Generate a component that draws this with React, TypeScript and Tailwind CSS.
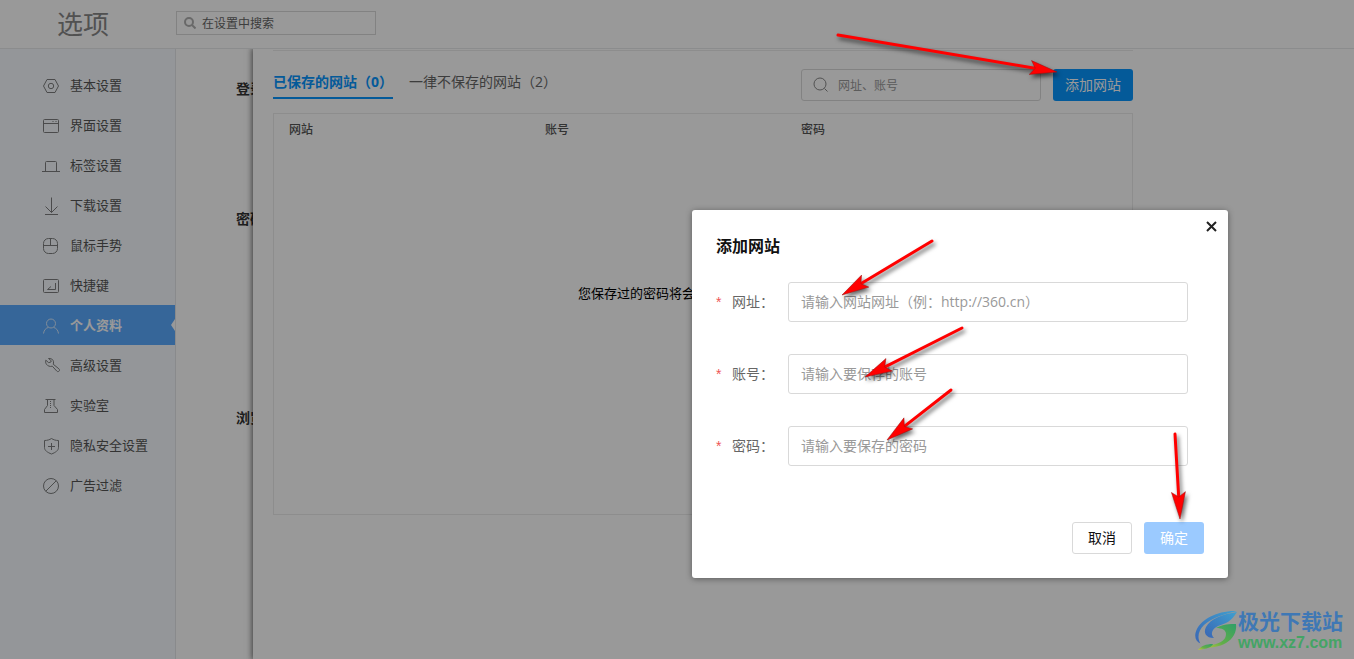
import React from 'react';

type IconProps = { children: React.ReactNode };

const Icon: React.FC<IconProps> = ({ children }) => (
  <svg className="size-[18px] shrink-0 opacity-75" viewBox="0 0 18 18" fill="none" stroke="currentColor" strokeWidth="1">
    {children}
  </svg>
);

const menus = [
  {
    text: '基本设置',
    icon: <><path d="M5 2.5h8l3.5 6.5-3.5 6.5H5L1.5 9z" strokeLinejoin="round" /><circle cx="9" cy="9" r="2.7" /></>,
  },
  {
    text: '界面设置',
    icon: <><rect x="1.500" y="2.500" width="15" height="13" rx="1" /><path d="M1.500 6.500h15M10.500 4.500h1M13.500 4.500h1" /></>,
  },
  {
    text: '标签设置',
    icon: <path d="M0 14.500h18M3.500 14.500v-9a1 1 0 0 1 1-1h9a1 1 0 0 1 1 1v9" />,
  },
  {
    text: '下载设置',
    icon: <path d="M9.500.5v15M3.500 9.500l6 6 6-6M3 17.500h13" />,
  },
  {
    text: '鼠标手势',
    icon: <><rect x="1.500" y="1.500" width="14" height="15" rx="5" /><path d="M1.500 8.500h14M8.500 1.500v7" /></>,
  },
  {
    text: '快捷键',
    icon: <><rect x="1.500" y="2.500" width="15" height="13" rx="1" /><path d="M13.500 6v6.500h-8M5.500 12.500l3.500-3" /></>,
  },
  {
    text: '个人资料',
    active: true,
    icon: <><circle cx="9" cy="6.500" r="4.500" /><path d="M1.500 16.500c.5-3.500 2.500-5.500 4.700-6M16.500 16.500c-.5-3.500-2.500-5.500-4.700-6" /></>,
  },
  {
    text: '高级设置',
    icon: <path d="M6.500 1.500c2.500-.6 4.700 1 5 3.300.1.900 0 1.600-.3 2.400l5.700 4.600c.8.700.8 1.700.2 2.300-.7.700-1.700.7-2.300 0l-4.500-4.900c-2.300.7-4.700-.2-5.900-2-.9-1.400-1-2.700-.6-4l2.900 2.500 2.200-.7.300-1.300z" strokeLinejoin="round" />,
  },
  {
    text: '实验室',
    icon: <><path d="M3.500 2.500h10M5.500 2.500v6l-3 4v3h13v-3l-3.500-4v-6" /><path d="M8.500 4v7" strokeDasharray="1 1" /></>,
  },
  {
    text: '隐私安全设置',
    icon: <><path d="M9.500 1.500c-2 1.300-4.300 2-7 2v7c0 3 3 5 7 6.500 4-1.500 7-3.500 7-6.500v-7c-2.700 0-5-.7-7-2z" strokeLinejoin="round" /><path d="M6 9.500h7M9.500 6v7" /></>,
  },
  {
    text: '广告过滤',
    icon: <><circle cx="9" cy="9" r="7.500" /><path d="m3.700 14.300 10.600-10.600" /></>,
  },
];

const fields = [
  { id: 'site-url', label: '网址：', placeholder: '请输入网站网址（例：http://360.cn）', type: 'text' },
  { id: 'site-account', label: '账号：', placeholder: '请输入要保存的账号', type: 'text' },
  { id: 'site-password', label: '密码：', placeholder: '请输入要保存的密码', type: 'password' },
];

const arrows = [
  { from: [838, 35], to: [1057, 72] },
  { from: [932, 241], to: [842, 295] },
  { from: [962, 328], to: [865, 377] },
  { from: [951, 390], to: [887, 440] },
  { from: [1175, 434], to: [1180, 519] },
];

const Arrow: React.FC<{ from: number[]; to: number[] }> = ({ from, to }) => {
  const dx = to[0] - from[0];
  const dy = to[1] - from[1];
  const len = Math.hypot(dx, dy);
  const angle = (Math.atan2(dy, dx) * 180) / Math.PI;

  return (
    <g transform={`translate(${from[0]} ${from[1]}) rotate(${angle})`}>
      <line x1="0" y1="0" x2={len - 18} y2="0" stroke="#ff0000" strokeWidth="3" strokeLinecap="round" />
      <path d={`M${len} 0L${len - 27} -7L${len - 22} 0L${len - 27} 7Z`} fill="#ff0000" stroke="#a01010" strokeWidth="0.500" />
    </g>
  );
};

const Header: React.FC = () => (
  <header className="flex h-[49px] shrink-0 items-center border-b border-[#e8eaec] bg-white">
    <h1 className="w-44 pl-[57px] text-[26px] leading-8 text-[#888]">选项</h1>
    <label className="mb-[2px] flex h-6 w-[200px] items-center gap-1 border border-[#d9d9d9] px-[7px]">
      <svg className="size-3 shrink-0" viewBox="0 0 12 12" fill="none" stroke="#b0b0b0" strokeWidth="2">
        <circle cx="5" cy="5" r="4" />
        <path d="m8 8 3.500 3.500" />
      </svg>
      <input
        type="search"
        aria-label="在设置中搜索"
        placeholder="在设置中搜索"
        className="w-full min-w-0 pt-[2px] pl-[2px] text-xs outline-none placeholder:text-[#666]"
      />
    </label>
  </header>
);

const Sidebar: React.FC = () => (
  <nav className="w-44 shrink-0 border-r border-[#e4e7ea] bg-[#f7fbff] pt-4">
    {menus.map((menu) => (
      <a
        key={menu.text}
        href="#"
        className={
          menu.active
            ? 'relative flex h-10 items-center gap-[10px] bg-[#5aaaff] pt-[2px] pl-[42px] text-[13px] font-bold text-white'
            : 'flex h-10 items-center gap-[10px] pt-[2px] pl-[42px] text-[13px] text-[#555]'
        }
      >
        <Icon>{menu.icon}</Icon>
        {menu.text}
        {menu.active && (
          <svg className="absolute top-[14px] right-0 h-3 w-1" viewBox="0 0 4 12" fill="#fff">
            <path d="M4 0v12L0 6z" />
          </svg>
        )}
      </a>
    ))}
  </nav>
);

const PasswordPanel: React.FC = () => (
  <section className="min-w-0 flex-1 bg-white px-5 pt-px shadow-[0_0_6px_1px_rgba(0,0,0,0.6)]">
    <div className="max-w-[860px] border-t border-[#ececec]">
      <div className="flex items-start pt-[18px]">
        <div role="tablist" className="flex flex-1 gap-4 text-sm leading-[26px] whitespace-nowrap">
          <button type="button" role="tab" aria-selected="true" className="w-[120px] border-b-2 border-[#0796ff] pb-[2px] text-left font-bold text-[#0796ff]">
            已保存的网站（0）
          </button>
          <button type="button" role="tab" aria-selected="false" className="pb-[4px] text-[#666]">
            一律不保存的网站（2）
          </button>
        </div>
        <label className="mr-3 flex h-8 w-60 items-center rounded-[3px] border border-[#d9d9d9] px-[11px]">
          <svg className="size-4 shrink-0" viewBox="0 0 16 16" fill="none" stroke="#888">
            <circle cx="7" cy="7" r="6" />
            <path d="m11.500 11.500 3 3" />
          </svg>
          <input
            type="search"
            aria-label="网址、账号"
            placeholder="网址、账号"
            className="w-full min-w-0 pt-px pl-[9px] text-xs outline-none placeholder:text-[#999]"
          />
        </label>
        <button type="button" className="h-8 w-20 rounded-[3px] bg-[#0796ff] text-sm text-white">
          添加网站
        </button>
      </div>

      <div className="mt-3 h-[402px] border border-[#ececec]">
        <table className="w-full table-fixed text-left text-xs text-[#555]">
          <thead>
            <tr className="h-8">
              <th className="w-[256px] pl-[15px] font-medium">网站</th>
              <th className="w-[256px] pl-[15px] font-medium">账号</th>
              <th className="pl-[15px] font-medium">密码</th>
            </tr>
          </thead>
          <tbody>
            <tr>
              <td colSpan={3} className="h-[296px] pl-[304px] text-[13px] text-black">您保存过的密码将会</td>
            </tr>
          </tbody>
        </table>
      </div>
    </div>
  </section>
);

const AddSiteDialog: React.FC = () => (
  <div
    role="dialog"
    aria-labelledby="dialog-title"
    className="relative w-[536px] rounded-[3px] bg-white p-6 shadow-[0_1px_6px_rgba(0,0,0,0.4)]"
  >
    <button type="button" aria-label="关闭" className="absolute top-[11px] right-[11px]">
      <svg className="size-[11px]" viewBox="0 0 11 11" fill="none" stroke="#222" strokeWidth="2">
        <path d="m1 1 9 9M10 1l-9 9" />
      </svg>
    </button>
    <h2 id="dialog-title" className="text-base leading-6 font-bold text-[#111]">添加网站</h2>
    <form>
      <div className="mt-6 flex flex-col gap-8">
        {fields.map((field) => (
          <div key={field.id} className="flex items-center">
            <label htmlFor={field.id} className="flex w-[72px] items-center text-sm whitespace-nowrap text-[#666]">
              <span className="w-4 font-['Liberation_Sans',sans-serif] text-sm text-[#ee5555]">*</span>
              {field.label}
            </label>
            <input
              id={field.id}
              type={field.type}
              placeholder={field.placeholder}
              className="h-10 w-[400px] rounded-[3px] border border-[#d9d9d9] px-3 pb-[2px] text-sm outline-none placeholder:text-[#999]"
            />
          </div>
        ))}
      </div>
      <div className="mt-14 flex justify-end gap-3 text-sm">
        <button type="button" className="h-8 w-[60px] rounded-[3px] border border-[#d9d9d9] text-[#111]">取消</button>
        <button type="submit" className="h-8 w-[60px] rounded-[3px] bg-[#9bcaff] text-white">确定</button>
      </div>
    </form>
  </div>
);

const Watermark: React.FC = () => (
  <div className="absolute right-[11px] bottom-[6px] flex items-center">
    <svg className="h-[42px] w-[43px]" viewBox="0 0 43 42">
      <defs>
        <linearGradient id="swirl-blue" x1="1" y1="0" x2="0" y2="1">
          <stop offset="0" stopColor="#3f9fd0" />
          <stop offset="1" stopColor="#3a66b4" />
        </linearGradient>
        <linearGradient id="swirl-green" x1="1" y1="0" x2="0" y2="1">
          <stop offset="0" stopColor="#2f9f68" />
          <stop offset="0.600" stopColor="#62ae48" />
          <stop offset="1" stopColor="#c8c83c" />
        </linearGradient>
      </defs>
      <path d="M42 1C24 0 4 9 .5 23c-1 5 1 9 5 10.500C2 28 3 21 9 15 17 8 29 4 42 1z" fill="url(#swirl-blue)" />
      <path d="M42 2C28 4 15 9 11 17c-3 6 0 11 8 11-4-4-2-9 4-12 8-3 13-4 19-14z" fill="url(#swirl-blue)" />
      <path d="M21 18c7-4 14-4 20-4 1 8-3 15-10 19-6 4-16 5-26 5 4-2 8-2 12-3 9-2 14-5 14-11 0-4-4-6-10-6z" fill="url(#swirl-green)" />
      <path d="M3 40c3-4 8-6 15-6-1 3-6 5-15 6z" fill="url(#swirl-green)" />
    </svg>
    <div className="whitespace-nowrap">
      <p className="text-[21px] leading-6 font-bold text-[#3f78b5]">极光下载站</p>
      <p className="font-['Liberation_Sans',sans-serif] text-base leading-5 font-bold text-[#44a465]">www.xz7.com</p>
    </div>
  </div>
);

const App: React.FC = () => {
  return (
    <div className="relative flex h-screen flex-col overflow-hidden bg-white font-['Open_Sans','Noto_Sans_CJK_SC',sans-serif]">
      <Header />
      <main className="flex min-h-0 flex-1 overflow-hidden">
        <Sidebar />
        {/* 被面板遮住的设置项 */}
        <div className="w-[77px] shrink-0 overflow-hidden pt-[30px] pl-[60px] text-sm leading-5 font-bold whitespace-nowrap text-[#333]">
          <h3>登录</h3>
          <h3 className="mt-[110px]">密码</h3>
          <h3 className="mt-[179px]">浏览</h3>
        </div>
        <PasswordPanel />
      </main>

      {/* 遮罩 + 弹窗 */}
      <div className="absolute inset-0 flex items-start justify-end bg-black/40 pt-[210px] pr-[126px]">
        <AddSiteDialog />
      </div>

      <Watermark />

      {/* 标注箭头 */}
      <svg className="pointer-events-none absolute top-0 left-0 h-[659px] w-[1354px] drop-shadow-[2px_3px_2px_rgba(0,0,0,0.6)]" viewBox="0 0 1354 659">
        {arrows.map((arrow) => (
          <Arrow key={arrow.from.join()} from={arrow.from} to={arrow.to} />
        ))}
      </svg>
    </div>
  );
};

export default App;
